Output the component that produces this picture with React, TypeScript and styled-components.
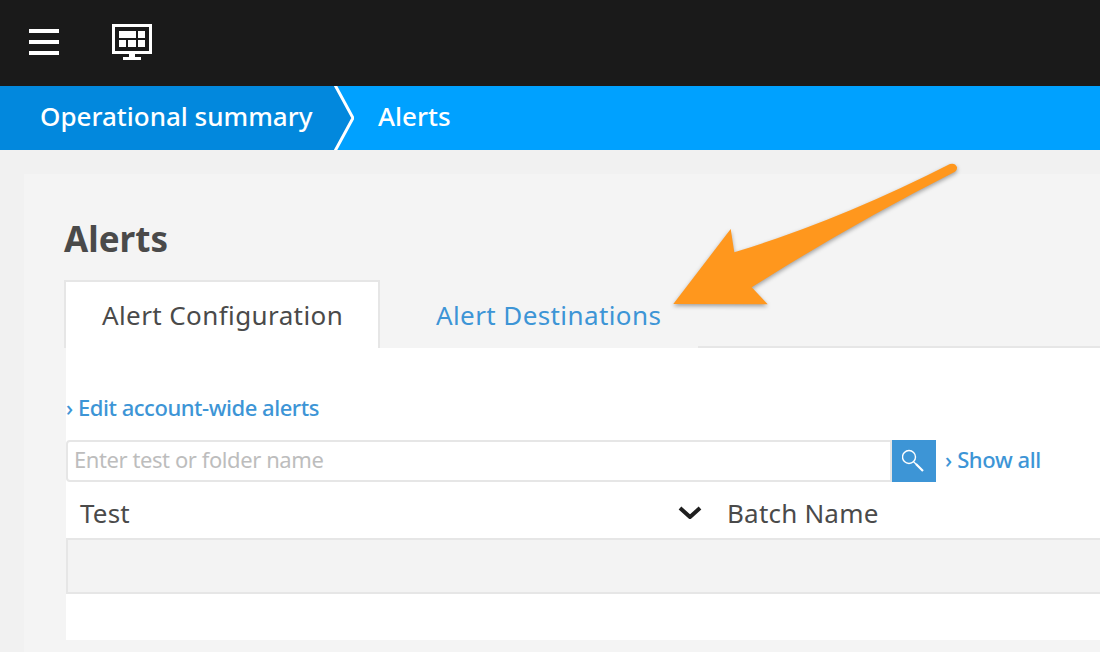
import React from 'react'
import styled, {createGlobalStyle} from 'styled-components'

const GlobalStyle = createGlobalStyle`
  html, body {
    margin: 0;
    padding: 0;
    background: #f1f1f1;
    font-family: "Noto Sans", "Open Sans", sans-serif;
  }
`

const Page = styled.div`
  position: relative;
  width: 1100px;
  height: 652px;
  overflow: hidden;
  background: #f1f1f1;
`

const TopBar = styled.header`
  display: flex;
  align-items: flex-start;
  height: 86px;
  background: #1a1a1a;
  padding: 24px 0 0 29px;
  box-sizing: border-box;
  gap: 53px;
`

const IconSlot = styled.div`
  display: flex;
  color: #fff;
`

const Breadcrumbs = styled.nav`
  display: flex;
  height: 64px;
  background: #00a1ff;
`

const Crumb = styled.div<{ $parent?: boolean }>`
  display: flex;
  align-items: center;
  box-sizing: border-box;
  height: 100%;
  padding-bottom: 4px;
  color: #fff;
  font-size: 26px;
  font-weight: 500;
  background: ${(p) => (p.$parent ? '#0288dd' : 'transparent')};
  width: ${(p) => (p.$parent ? '334px' : 'auto')};
  padding-left: ${(p) => (p.$parent ? '40px' : '24px')};
  white-space: nowrap;
`

const CrumbSeparator = styled.svg`
  display: block;
  flex: none;
`

const Panel = styled.main`
  margin: 24px 0 0 24px;
  height: 478px;
  background: #f4f4f4;
  padding-left: 40px;
  display: flex;
  flex-direction: column;
`

const Title = styled.h1`
  margin: 0;
  padding-top: 42px;
  height: 64px;
  box-sizing: content-box;
  font-size: 35px;
  line-height: 46px;
  font-weight: 700;
  color: #4a4a4a;
`

const TabRow = styled.div`
  display: flex;
  height: 68px;
`

const Tab = styled.div<{ $active?: boolean }>`
  display: flex;
  align-items: center;
  box-sizing: border-box;
  height: 100%;
  width: ${(p) => (p.$active ? '316px' : '318px')};
  font-size: 26px;
  letter-spacing: 0.4px;
  color: ${(p) => (p.$active ? '#4a4a4a' : '#3d95d6')};
  background: ${(p) => (p.$active ? '#fff' : 'transparent')};
  border: ${(p) => (p.$active ? '2px solid #e6e6e6' : 'none')};
  border-bottom: none;
  padding-left: ${(p) => (p.$active ? '36px' : '56px')};
  padding-top: ${(p) => (p.$active ? '0' : '2px')};
  padding-bottom: ${(p) => (p.$active ? '1px' : '0')};
`

const TabRule = styled.div`
  flex: 1;
  align-self: flex-end;
  height: 2px;
  background: #e6e6e6;
`

const Content = styled.section`
  margin-left: 2px;
  height: 292px;
  background: #fff;
  display: flex;
  flex-direction: column;
`

const AccountLink = styled.a`
  height: 92px;
  box-sizing: border-box;
  padding-top: 43px;
  font-size: 22px;
  line-height: 32px;
  font-weight: 500;
  color: #3d95d6;
  letter-spacing: -0.46px;
`

const SearchRow = styled.div`
  display: flex;
  align-items: center;
  height: 42px;
`

const SearchField = styled.div`
  box-sizing: border-box;
  width: 826px;
  height: 42px;
  display: flex;
  align-items: center;
  padding: 0 0 4px 6px;
  border: 2px solid #e6e6e6;
  border-radius: 4px 0 0 4px;
  background: #fff;
  font-size: 22px;
  color: #bdbdbd;
  letter-spacing: -0.42px;
`

const SearchButton = styled.div`
  width: 44px;
  height: 42px;
  background: #3d95d6;
  display: flex;
  align-items: center;
  justify-content: center;
`

const ShowAll = styled.a`
  margin-left: 9px;
  padding-bottom: 4px;
  font-size: 22px;
  font-weight: 500;
  color: #3d95d6;
  letter-spacing: -0.38px;
`

const TableHeader = styled.div`
  display: flex;
  align-items: center;
  height: 56px;
  box-sizing: border-box;
  padding: 5px 0 0 14px;
  font-size: 26px;
  letter-spacing: 0.2px;
  color: #4a4a4a;
`

const SortColumn = styled.div`
  display: flex;
  align-items: center;
  justify-content: space-between;
  width: 623px;
  margin-right: 24px;
`

const TableRow = styled.div`
  box-sizing: border-box;
  height: 56px;
  background: #f3f3f3;
  border: 2px solid #e6e6e6;
  border-right: none;
`

const ArrowOverlay = styled.svg`
  position: absolute;
  left: 660px;
  top: 150px;
  filter: drop-shadow(0 2px 2px rgba(0, 0, 0, 0.35));
  pointer-events: none;
`

const MenuIcon = () => (
  <svg width="30" height="32" viewBox="0 0 30 32" fill="currentColor">
    <rect x="0" y="5" width="30" height="4" />
    <rect x="0" y="16" width="30" height="4" />
    <rect x="0" y="27" width="30" height="4" />
  </svg>
)

const DashboardIcon = () => (
  <svg width="40" height="36" viewBox="0 0 40 36" fill="currentColor">
    <path fillRule="evenodd" d="M0 0h40v30H0z M3 3v24h34V3z" />
    <rect x="7" y="7" width="17" height="7" />
    <rect x="26" y="7" width="7" height="7" />
    <rect x="7" y="16" width="7" height="7" />
    <rect x="16" y="16" width="8" height="7" />
    <rect x="26" y="16" width="7" height="7" />
    <rect x="17" y="30" width="6" height="3" />
    <rect x="11" y="33" width="18" height="3" />
  </svg>
)

const SearchIcon = () => (
  <svg width="24" height="24" viewBox="0 0 24 24" fill="none" stroke="#fff">
    <circle cx="7" cy="8" r="6.5" strokeWidth="1.4" />
    <path d="M11.5 12.8l3 2.7" strokeWidth="1.2" />
    <path d="M14 15l7 7" strokeWidth="2.2" />
  </svg>
)

const SortIcon = () => (
  <svg width="26" height="16" viewBox="0 0 26 16" fill="none">
    <path d="M3 3l10 9 10-9" stroke="#1f1f1f" strokeWidth="4" strokeLinejoin="round" />
  </svg>
)

export default function App() {
  return (
    <Page>
      <GlobalStyle />
      <TopBar>
        <IconSlot><MenuIcon /></IconSlot>
        <IconSlot><DashboardIcon /></IconSlot>
      </TopBar>
      <Breadcrumbs>
        <Crumb $parent>Operational summary</Crumb>
        <CrumbSeparator width="20" height="64" viewBox="0 0 20 64">
          <path d="M0 0h1l18 32L1 64H0z" fill="#0288dd" />
          <path d="M1 -1l18 33L1 65" fill="none" stroke="#fff" strokeWidth="3" />
        </CrumbSeparator>
        <Crumb>Alerts</Crumb>
      </Breadcrumbs>
      <Panel>
        <Title>Alerts</Title>
        <TabRow>
          <Tab $active>Alert Configuration</Tab>
          <Tab>Alert Destinations</Tab>
          <TabRule />
        </TabRow>
        <Content>
          <AccountLink>› Edit account-wide alerts</AccountLink>
          <SearchRow>
            <SearchField>Enter test or folder name</SearchField>
            <SearchButton><SearchIcon /></SearchButton>
            <ShowAll>› Show all</ShowAll>
          </SearchRow>
          <TableHeader>
            <SortColumn>
              <span>Test</span>
              <SortIcon />
            </SortColumn>
            <span>Batch Name</span>
          </TableHeader>
          <TableRow />
        </Content>
      </Panel>
      <ArrowOverlay width="310" height="170" viewBox="660 150 310 170">
        <path
          d="M673.3 304 L730.7 229 L734.3 252.3 Q840 220 950 164 Q955 162.5 957 167 Q957.5 170 955 171.7 Q850 225 751.7 287.3 L767.7 304.3 Z"
          fill="#ff971d"
        />
      </ArrowOverlay>
    </Page>
  )
}
